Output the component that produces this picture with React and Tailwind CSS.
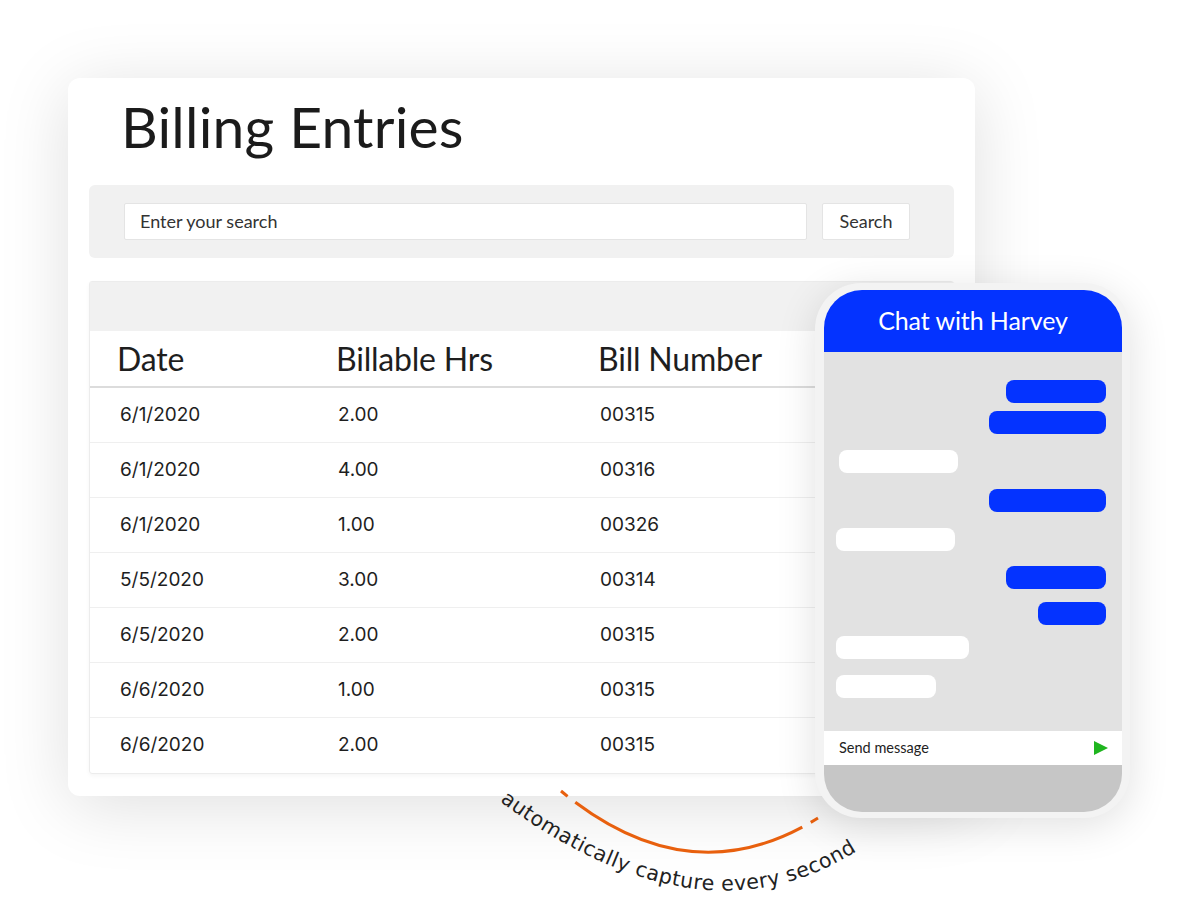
import React from 'react';

const rows = [
    { date: '6/1/2020', hrs: '2.00', bill: '00315' },
    { date: '6/1/2020', hrs: '4.00', bill: '00316' },
    { date: '6/1/2020', hrs: '1.00', bill: '00326' },
    { date: '5/5/2020', hrs: '3.00', bill: '00314' },
    { date: '6/5/2020', hrs: '2.00', bill: '00315' },
    { date: '6/6/2020', hrs: '1.00', bill: '00315' },
    { date: '6/6/2020', hrs: '2.00', bill: '00315' },
];

// chat bubbles: side, width, top margin
const bubbles = [
    { me: true, w: 'w-[100px]', mt: 'mt-[28px]' },
    { me: true, w: 'w-[117px]', mt: 'mt-[8px]' },
    { me: false, w: 'w-[119px] ml-[15px]', mt: 'mt-[16px]' },
    { me: true, w: 'w-[117px]', mt: 'mt-[16px]' },
    { me: false, w: 'w-[119px] ml-[12px]', mt: 'mt-[16px]' },
    { me: true, w: 'w-[100px]', mt: 'mt-[15px]' },
    { me: true, w: 'w-[68px]', mt: 'mt-[13px]' },
    { me: false, w: 'w-[133px] ml-[12px]', mt: 'mt-[11px]' },
    { me: false, w: 'w-[100px] ml-[12px]', mt: 'mt-[16px]' },
];

const PhoneChat = () => (
    <div className="absolute left-[815px] top-[283px] w-[315px] h-[535px] rounded-[46px] bg-[#f3f3f3] pl-[9px] pr-[8px] pt-[7px] pb-[6px] shadow-[0_8px_40px_rgba(0,0,0,0.12)]">
        <div className="h-full rounded-[38px] overflow-hidden flex flex-col">
            {/* Header */}
            <div className="h-[62px] bg-[#0433ff] flex items-center justify-center">
                <span className="text-white text-[25px] font-['Lato'] tracking-[-0.1px]">Chat with Harvey</span>
            </div>

            {/* Messages */}
            <div className="h-[379px] bg-[#e2e2e2] flex flex-col">
                {bubbles.map((b, i) => (
                    <div
                        key={i}
                        className={`${b.mt} ${b.w} h-[23px] rounded-[8px] ${b.me ? 'self-end mr-[16px] bg-[#0433ff]' : 'self-start bg-white'}`}
                    />
                ))}
            </div>

            {/* Input */}
            <div className="h-[34px] bg-white flex items-center justify-between pl-[15px] pr-[13px]">
                <span className="text-[14.5px] text-[#222] font-['Lato']">Send message</span>
                <svg width="16" height="16" viewBox="0 0 16 16">
                    <path d="M1 1 L15 8 L1 15 Z" fill="#1fb51f" />
                </svg>
            </div>
            <div className="flex-1 bg-[#c6c6c6]" />
        </div>
    </div>
);

const CurvedCaption = () => (
    <svg className="absolute left-0 top-0" width="1200" height="900" viewBox="0 0 1200 900">
        <defs>
            <path id="captionArc" d="M 498 800 Q 702 951 858 850" fill="none" />
        </defs>
        <path
            d="M 561 791 Q 690 898 818 818"
            fill="none"
            stroke="#e8600e"
            strokeWidth="3"
            pathLength="100"
            strokeDasharray="3 3.5 87 3.5 3"
        />
        <text fontFamily="'DejaVu Sans', Verdana, sans-serif" fontSize="20.5" fill="#222">
            <textPath href="#captionArc" startOffset="2" textLength="386" lengthAdjust="spacing">
                automatically capture every second
            </textPath>
        </text>
    </svg>
);

const App = () => {
    return (
        <div className="relative w-[1200px] h-[900px] bg-white overflow-hidden">
            <div className="pt-[78px] pl-[68px]">
                {/* Billing card */}
                <div className="w-[907px] h-[718px] bg-white rounded-[12px] shadow-[0_10px_70px_rgba(0,0,0,0.13)] px-[21px]">
                    <div className="h-[107px] pl-[32px] pt-[20px]">
                        <h1 className="text-[57px] leading-none text-[#1b1b1b] font-['Lato'] tracking-[0.2px]">Billing Entries</h1>
                    </div>

                    {/* Search */}
                    <div className="h-[73px] bg-[#f1f1f1] rounded-[6px] flex items-center pl-[35px] pr-[44px] gap-[15px]">
                        <div className="flex-1 h-[37px] bg-white border border-[#e4e4e4] rounded-[2px] flex items-center pl-[15px]">
                            <span className="text-[18px] text-[#333] font-['Lato']">Enter your search</span>
                        </div>
                        <div className="w-[88px] h-[37px] bg-white border border-[#e4e4e4] rounded-[2px] flex items-center justify-center">
                            <span className="text-[18px] text-[#333] font-['Lato']">Search</span>
                        </div>
                    </div>

                    {/* Table */}
                    <div className="mt-[23px] border border-[#ececec] rounded-[3px] shadow-[0_2px_4px_rgba(0,0,0,0.04)]">
                        <div className="h-[49px] bg-[#f1f1f1]" />
                        <div className="h-[57px] grid grid-cols-[219px_262px_1fr] items-center border-b-2 border-[#dcdcdc] pl-[27px] text-[32px] text-[#1e1e1e] font-['Lato'] tracking-[-0.2px]">
                            <span>Date</span>
                            <span>Billable Hrs</span>
                            <span>Bill Number</span>
                        </div>
                        {rows.map((r, i) => (
                            <div
                                key={i}
                                className={`h-[55px] grid grid-cols-[218px_262px_1fr] items-center pl-[30px] text-[19px] text-[#1e1e1e] font-['Inter'] ${i < rows.length - 1 ? 'border-b border-[#efefef]' : ''}`}
                            >
                                <span>{r.date}</span>
                                <span>{r.hrs}</span>
                                <span>{r.bill}</span>
                            </div>
                        ))}
                    </div>
                </div>
            </div>

            <CurvedCaption />
            <PhoneChat />
        </div>
    );
};

export default App;
